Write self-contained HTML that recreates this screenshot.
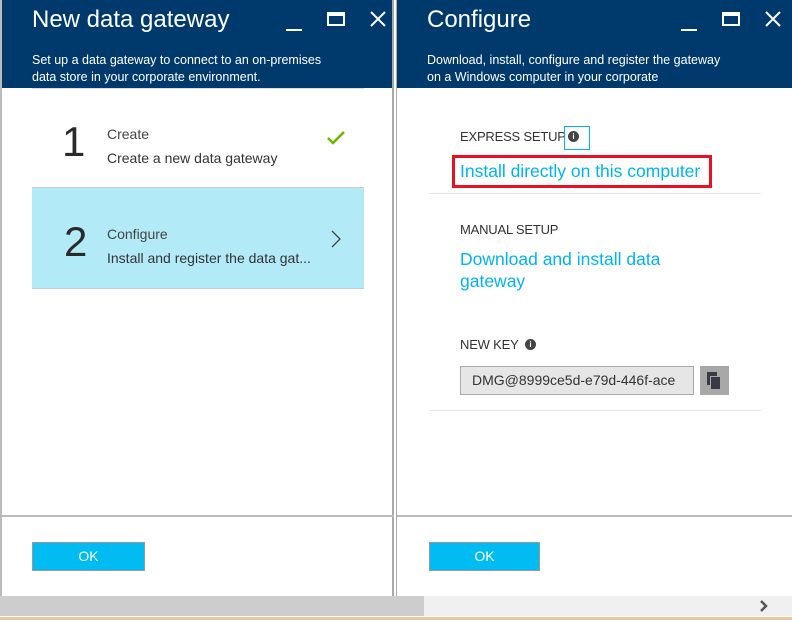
<!DOCTYPE html>
<html><head><style>
*{margin:0;padding:0;box-sizing:border-box}
body{width:792px;height:620px;overflow:hidden;background:#fff;font-family:"Liberation Sans",sans-serif;position:relative;color:#333}
.p{position:absolute;top:0;height:596px;background:#fff}
.hd{position:absolute;left:0;top:0;right:0;height:88px;background:#003a6c;color:#fff}
.t{position:absolute;left:30px;top:6px;font-size:24px;font-weight:normal}
.s{position:absolute;left:30px;top:52px;font-size:12.5px;line-height:17px}
.ic{position:absolute;top:10px;font-size:22px}
.a{position:absolute}
.btn{position:absolute;top:42px;width:113px;height:29px;background:#00bcf2;border:1px solid #999;color:#fff;font-size:14px;text-align:center;line-height:27px}
.lnk{color:#00b4f0;font-size:17px}
.lab{font-size:13px;color:#333;letter-spacing:-0.2px}
</style></head><body>
<div class="p" style="left:0;width:394px;border-left:2px solid #bbb;border-right:2px solid #aaa">
 <div class="hd">
  <div class="t">New data gateway</div>
  <div class="a" style="left:284px;top:29px;width:16px;height:2px;background:#fff"></div>
  <div class="a" style="left:325px;top:12px;width:18px;height:14px;border:2px solid #fff;border-top-width:4px"></div>
  <svg class="a" style="left:368px;top:11px" width="16" height="16" viewBox="0 0 16 16"><path d="M1 1L15 15M15 1L1 15" stroke="#fff" stroke-width="2"/></svg>
  <div class="s">Set up a data gateway to connect to an on-premises<br>data store in your corporate environment.</div>
 </div>
 <div class="a" style="left:30px;top:88px;width:332px;height:1px;background:#ddd"></div>
 <div class="a" style="left:60px;top:118px;font-size:42px;color:#2a2a2a">1</div>
 <div class="a" style="left:105px;top:126px;font-size:14px;color:#444">Create</div>
 <div class="a" style="left:105px;top:150px;font-size:14px;color:#333">Create a new data gateway</div>
 <svg class="a" style="left:325px;top:131px" width="18" height="14" viewBox="0 0 18 14"><path d="M1 7L6 12L17 1" stroke="#6bb700" stroke-width="2.5" fill="none"/></svg>
 <div class="a" style="left:30px;top:187px;width:332px;height:102px;background:#b2ebf7;border-top:1px solid #ccc;border-bottom:1px solid #ccc"></div>
 <div class="a" style="left:62px;top:218px;font-size:42px;color:#2a2a2a">2</div>
 <div class="a" style="left:105px;top:226px;font-size:14px;color:#444">Configure</div>
 <div class="a" style="left:105px;top:250px;font-size:14px;color:#333">Install and register the data gat...</div>
 <svg class="a" style="left:328px;top:230px" width="12" height="18" viewBox="0 0 12 18"><path d="M2 1L10 9L2 17" stroke="#444" stroke-width="1.3" fill="none"/></svg>
 <div class="a" style="left:0;top:515px;width:392px;height:2px;background:#bbb"></div>
 <div class="btn" style="left:30px;top:542px">OK</div>
</div>
<div class="p" style="left:396px;width:396px;border-left:1px solid #aaa">
 <div class="hd">
  <div class="t">Configure</div>
  <div class="a" style="left:284px;top:29px;width:16px;height:2px;background:#fff"></div>
  <div class="a" style="left:325px;top:12px;width:18px;height:14px;border:2px solid #fff;border-top-width:4px"></div>
  <svg class="a" style="left:368px;top:11px" width="16" height="16" viewBox="0 0 16 16"><path d="M1 1L15 15M15 1L1 15" stroke="#fff" stroke-width="2"/></svg>
  <div class="s">Download, install, configure and register the gateway<br>on a Windows computer in your corporate</div>
 </div>
 <div class="a lab" style="left:63px;top:129px">EXPRESS SETUP</div>
 <div class="a" style="left:167px;top:126px;width:26px;height:24px;border:1px solid #00b4f0"></div>
 <div class="a" style="left:171px;top:131px;width:11px;height:11px;border-radius:50%;background:#444;color:#fff;font-size:8px;text-align:center;line-height:11px;font-weight:bold">i</div>
 <div class="a" style="left:55px;top:155px;width:260px;height:33px;border:3px solid #e81123"></div>
 <div class="a lnk" style="left:63px;top:161px;font-size:17.5px">Install directly on this computer</div>
 <div class="a" style="left:32px;top:193px;width:332px;height:1px;background:#e5e5ee"></div>
 <div class="a lab" style="left:63px;top:222px">MANUAL SETUP</div>
 <div class="a lnk" style="left:63px;top:248px;line-height:22px;font-size:17.5px">Download and install data<br>gateway</div>
 <div class="a lab" style="left:63px;top:337px">NEW KEY</div>
 <div class="a" style="left:128px;top:339px;width:11px;height:11px;border-radius:50%;background:#444;color:#fff;font-size:8px;text-align:center;line-height:11px;font-weight:bold">i</div>
 <div class="a" style="left:63px;top:366px;width:234px;height:29px;background:#e6e6e6;border:1px solid #aaa;font-size:14px;line-height:27px;padding-left:11px;overflow:hidden;white-space:nowrap;color:#333">DMG@8999ce5d-e79d-446f-ace</div>
 <div class="a" style="left:303px;top:366px;width:29px;height:29px;background:#a8a8a8"></div>
 <div class="a" style="left:310px;top:372px;width:10px;height:13px;background:#3a3a44"></div>
 <div class="a" style="left:313px;top:376px;width:10px;height:13px;background:#3a3a44;border-left:1px solid #a8a8a8;border-top:1px solid #a8a8a8"></div>
 <div class="a" style="left:32px;top:410px;width:332px;height:1px;background:#e5e5ee"></div>
 <div class="a" style="left:0;top:515px;width:396px;height:2px;background:#bbb"></div>
 <div class="btn" style="left:32px;top:542px;width:111px">OK</div>
</div>
<div class="a" style="left:0;top:596px;width:792px;height:20px;background:#f0f0f0"></div>
<div class="a" style="left:0;top:596px;width:424px;height:20px;background:#cdcdcd"></div>
<svg class="a" style="left:759px;top:600px" width="10" height="12" viewBox="0 0 10 12"><path d="M2 1L7 6L2 11" stroke="#555" stroke-width="2.5" fill="none"/></svg>
<div class="a" style="left:0;top:617px;width:792px;height:3px;background:#e8c9a0"></div>
</body></html>
